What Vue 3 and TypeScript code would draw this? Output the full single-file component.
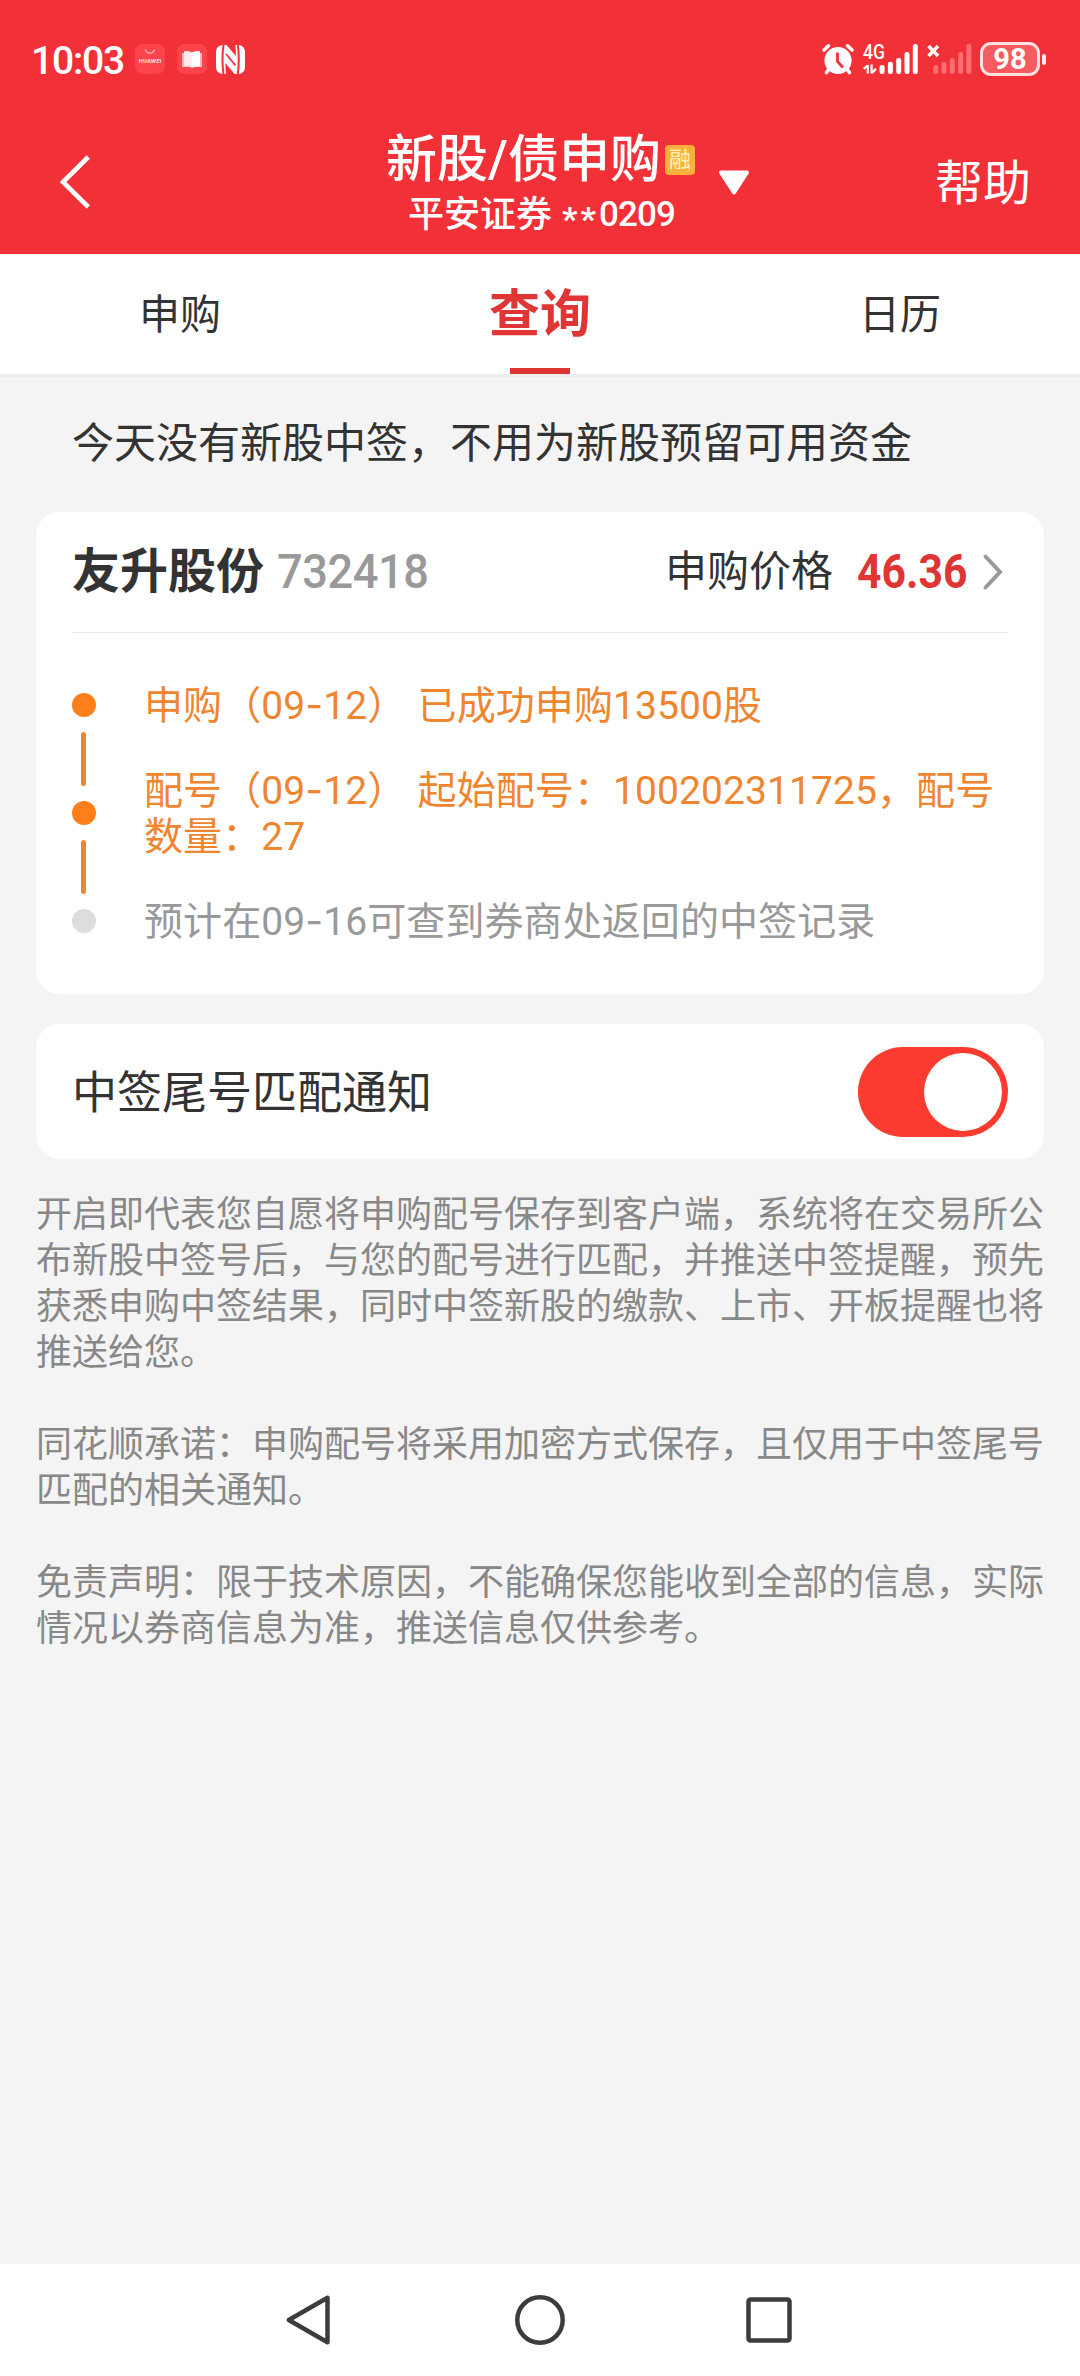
<script setup lang="ts">
import { ref } from 'vue'

interface Tab {
  key: string
  label: string
}

const tabs: Tab[] = [
  { key: 'apply', label: '申购' },
  { key: 'query', label: '查询' },
  { key: 'calendar', label: '日历' },
]
const activeTab = ref('query')
const notifyOn = ref(true)

const signalBars = [
  { x: 0, top: 21 },
  { x: 8.3, top: 17.7 },
  { x: 16.6, top: 14 },
  { x: 24.9, top: 8 },
  { x: 33.2, top: 0 },
]

const notes: string[] = [
  '开启即代表您自愿将申购配号保存到客户端，系统将在交易所公布新股中签号后，与您的配号进行匹配，并推送中签提醒，预先获悉申购中签结果，同时中签新股的缴款、上市、开板提醒也将推送给您。',
  '同花顺承诺：申购配号将采用加密方式保存，且仅用于中签尾号匹配的相关通知。',
  '免责声明：限于技术原因，不能确保您能收到全部的信息，实际情况以券商信息为准，推送信息仅供参考。',
]
</script>

<template>
  <div class="screen">
    <header class="top">
      <div class="status">
        <div class="status-left">
          <span class="time">10:03</span>
          <svg class="app-icon" width="30" height="30" viewBox="0 0 30 30">
            <rect width="30" height="30" rx="8" fill="#fd444c" />
            <path d="M10.5 5.5a4.6 4.6 0 0 0 9 0" fill="none" stroke="#ffd9db" stroke-width="1.2" />
            <text x="3.8" y="19" font-size="5.2" font-weight="700" textLength="22.5" fill="#ffe3e4">HUAWEI</text>
          </svg>
          <svg class="app-icon book" width="30" height="30" viewBox="0 0 30 30">
            <rect width="30" height="30" rx="8" fill="#fd444c" />
            <path d="M5 9h20v14H5z" fill="#ffb3b6" />
            <path d="M7 7.2q5-1 8 1.2v15.6q-3-2-8-1.2z" fill="#ffe9ea" />
            <path d="M23 7.2q-5-1-8 1.2v15.6q3-2 8-1.2z" fill="#fff" />
          </svg>
          <svg class="nfc" width="29" height="29" viewBox="0 0 29 29">
            <rect width="29" height="29" rx="6.5" fill="#fff" />
            <path d="M7.500 0Q5.500 14 7.500 29M21.800 0q2 14 0 29" fill="none" stroke="#f23037" stroke-width="2" />
            <path d="M10.500 0L19.800 11V5.500Q19.800 2.500 19.300 0z" fill="#f23037" />
            <path d="M9.500 18L18.500 29H9.800Q9.300 24 9.500 18z" fill="#f23037" />
            <path d="M10 9L19.500 20.500" stroke="#f23037" stroke-width="1.800" />
          </svg>
        </div>
        <div class="status-right">
          <svg class="alarm" width="32" height="31" viewBox="0 0 32 31">
            <circle cx="16" cy="16.500" r="13.600" fill="#fff" />
            <path d="M2 6L6.500 1.800M30 6L25.500 1.800" stroke="#fff" stroke-width="3.600" stroke-linecap="round" />
            <path d="M7 25L4.500 28.500M25 25l2.500 3.500" stroke="#fff" stroke-width="3.600" stroke-linecap="round" />
            <path d="M15.500 8.500v9l5.500 6" fill="none" stroke="#f23037" stroke-width="2.800" />
          </svg>
          <svg class="signal" width="56" height="31" viewBox="0 0 56 31">
            <text x="0" y="15.200" font-size="20" font-weight="500" textLength="22" lengthAdjust="spacingAndGlyphs" fill="#fff">4G</text>
            <path d="M4.800 29.500V21M4.500 21.500L0.800 25M8.600 20.500v9M9 29l4-4.200" stroke="#fff" stroke-width="2.200" fill="none" />
            <rect v-for="b in signalBars" :key="b.x" :x="16.600 + b.x" :y="b.top" width="5" :height="30 - b.top" rx="2.200" fill="#fff" />
          </svg>
          <svg class="signal-off" width="45" height="31" viewBox="0 0 45 31">
            <rect v-for="b in signalBars" :key="b.x" :x="6.200 + b.x" :y="b.top" width="5" :height="30 - b.top" rx="2.200" fill="#ff6d74" />
            <path d="M1.500 2L11 12M11 2L1.500 12" stroke="#fff" stroke-width="3.400" />
          </svg>
          <div class="battery"><span>98</span></div>
          <i class="nub"></i>
        </div>
      </div>

      <div class="bar">
        <svg class="back" width="32" height="56" viewBox="0 0 32 56">
          <path d="M28.300 3L3 28L28.300 53" fill="none" stroke="#fff" stroke-width="4.600" />
        </svg>
        <div class="title-area">
          <div class="titles">
            <h1>新股/债申购<span class="margin-tag">融</span></h1>
            <p class="account">平安证券<span class="stars">**</span><span class="acc-no">0209</span></p>
          </div>
          <svg class="caret" width="32" height="26" viewBox="0 0 32 26">
            <path d="M3 2.500h26L16 22.500z" fill="#fff" stroke="#fff" stroke-width="4" stroke-linejoin="round" />
          </svg>
        </div>
        <a class="help">帮助</a>
      </div>
    </header>

    <nav class="tabs">
      <button
        v-for="t in tabs"
        :key="t.key"
        :class="['tab', { active: t.key === activeTab }]"
        @click="activeTab = t.key"
      >
        {{ t.label }}
      </button>
    </nav>

    <main class="content">
      <p class="tip">今天没有新股中签，不用为新股预留可用资金</p>

      <section class="card stock">
        <div class="stock-head">
          <b class="name">友升股份</b>
          <span class="code">732418</span>
          <span class="label">申购价格</span>
          <span class="price">46.36</span>
          <svg class="arrow" width="20" height="36" viewBox="0 0 20 36">
            <path d="M2.500 2.500L17 18L2.500 33.500" fill="none" stroke="#999" stroke-width="4" stroke-linecap="round" />
          </svg>
        </div>
        <div class="timeline">
          <div class="track">
            <i class="dot"></i><i class="line"></i><i class="dot"></i><i class="line"></i><i class="dot idle"></i>
          </div>
          <div class="steps">
            <p>申购（09<span class="dash">-</span>12） 已成功申购13500股</p>
            <p>配号（09<span class="dash">-</span>12） 起始配号：100202311725，配号数量：27</p>
            <p class="idle">预计在09<span class="dash">-</span>16可查到券商处返回的中签记录</p>
          </div>
        </div>
      </section>

      <section class="card notify">
        <span class="notify-label">中签尾号匹配通知</span>
        <button :class="['switch', { on: notifyOn }]" @click="notifyOn = !notifyOn"><i></i></button>
      </section>

      <div class="notes">
        <p v-for="n in notes" :key="n">{{ n }}</p>
      </div>
    </main>

    <footer class="nav">
      <svg width="52" height="52" viewBox="0 0 52 52">
        <path d="M42.500 3.800V48.200L3.800 26z" />
      </svg>
      <svg width="52" height="52" viewBox="0 0 52 52">
        <circle cx="26" cy="26" r="22.700" />
      </svg>
      <svg width="52" height="52" viewBox="0 0 52 52">
        <rect x="5.500" y="5.500" width="41" height="41" rx="2" />
      </svg>
    </footer>
  </div>
</template>

<style>
body {
  margin: 0;
  background: #f4f4f4;
}
</style>

<style scoped>
.screen {
  display: flex;
  flex-direction: column;
  width: 1080px;
  height: 2376px;
  overflow: hidden;
  background: #f4f4f4;
  color: #333;
  font-family: Roboto, 'Noto Sans CJK SC', sans-serif;
  text-spacing-trim: space-all;
}
p,
h1 {
  margin: 0;
  font-weight: 400;
}
button {
  border: 0;
  padding: 0;
  background: none;
  font-family: inherit;
  color: inherit;
}
svg {
  display: block;
  flex: none;
  overflow: visible;
}

/* red header */
.top {
  height: 254px;
  background: #f23037;
  color: #fff;
}
.status {
  display: flex;
  justify-content: space-between;
  height: 118px;
  box-sizing: border-box;
  padding: 0 34px 0 31px;
}
.status-left,
.status-right {
  display: flex;
  align-items: center;
  height: 118px;
}
.time {
  width: 104px;
  font-family: Roboto, sans-serif;
  font-size: 39px;
  font-weight: 500;
  letter-spacing: -1.2px;
  line-height: 46px;
  padding-top: 3px;
}
.app-icon text {
  font-family: Inter, sans-serif;
}
.book {
  margin-left: 12px;
}
.nfc {
  margin-left: 9px;
}
.signal {
  margin-left: 9px;
}
.signal-off {
  margin-left: 8px;
}
.battery {
  box-sizing: border-box;
  width: 60px;
  height: 34px;
  margin-left: 8px;
  border: 3px solid #ffe1e2;
  border-radius: 11px;
  background: #f55b61;
  font-size: 29px;
  font-weight: 700;
  line-height: 29px;
  text-align: center;
}
.nub {
  width: 4px;
  height: 11px;
  margin-left: 2px;
  border-radius: 2px;
  background: #ffe9ea;
}
.bar {
  display: flex;
  align-items: center;
  height: 128px;
  padding: 0 49px 0 60px;
}
.title-area {
  display: flex;
  align-items: center;
  margin-left: 294px;
}
.titles {
  width: 332px;
}
h1 {
  display: flex;
  align-items: center;
  height: 66px;
  margin-top: 1px;
  font-size: 51px;
  font-weight: 500;
  line-height: 66px;
  white-space: nowrap;
}
.margin-tag {
  width: 30px;
  height: 30px;
  margin-left: 4px;
  border-radius: 4px;
  background: #fab03c;
  color: #fff0b8;
  font-size: 22px;
  font-weight: 400;
  line-height: 29px;
  text-align: center;
}
.account {
  display: flex;
  align-items: center;
  height: 46px;
  margin-top: -1px;
  margin-left: 22px;
  font-size: 36px;
  font-weight: 500;
  line-height: 46px;
}
.stars {
  margin: 7px 0 0 10px;
  font-size: 34px;
  font-weight: 700;
  letter-spacing: 3px;
}
.acc-no {
  font-size: 35px;
  letter-spacing: -0.9px;
}
.caret {
  margin-top: 2px;
}
.help {
  margin: -6px 0 0 auto;
  font-size: 48px;
}

/* tabs */
.tabs {
  display: flex;
  height: 120px;
  background: #fff;
  border-bottom: 3px solid #eee;
}
.tab {
  position: relative;
  flex: 1;
  padding-top: 2px;
  font-size: 41px;
  line-height: 118px;
}
.tab.active {
  color: #e03535;
  font-size: 51px;
  font-weight: 700;
}
.tab.active::after {
  content: '';
  position: absolute;
  left: 50%;
  bottom: 0;
  width: 60px;
  height: 6px;
  margin-left: -30px;
  background: #e03535;
}

/* content */
.content {
  flex: 1;
  padding: 0 36px;
}
.tip {
  height: 135px;
  padding-left: 36px;
  font-size: 42px;
  line-height: 133px;
}
.card {
  border-radius: 24px;
  background: #fff;
}
.stock {
  box-sizing: border-box;
  height: 482px;
  padding: 0 36px;
}
.stock-head {
  display: flex;
  align-items: center;
  height: 120px;
  border-bottom: 1px solid #ebebeb;
  line-height: 122px;
}
.name {
  font-size: 48px;
}
.code {
  width: 148px;
  margin-left: 13px;
  color: #999;
  font-size: 48px;
  font-weight: 500;
  letter-spacing: -0.4px;
  transform: scaleX(0.94);
  transform-origin: 0 50%;
}
.label {
  margin-left: auto;
  font-size: 42px;
}
.price {
  width: 110px;
  margin-left: 24px;
  color: #e03535;
  font-size: 48px;
  font-weight: 700;
  transform: scaleX(0.89);
  transform-origin: 0 50%;
}
.arrow {
  margin: 0 5px 0 16px;
}
.timeline {
  display: flex;
  gap: 48px;
  padding-top: 50px;
}
.track {
  display: flex;
  flex-direction: column;
  align-items: center;
  gap: 15px;
  width: 24px;
  padding-top: 10px;
}
.dot {
  width: 24px;
  height: 24px;
  border-radius: 50%;
  background: #ff801a;
}
.dot.idle {
  background: #ddd;
}
.line {
  width: 5px;
  height: 54px;
  margin-right: 1px;
  border-radius: 2.5px;
  background: #f08530;
}
.steps {
  display: flex;
  flex: 1;
  flex-direction: column;
  gap: 39px;
  color: #f08530;
  font-size: 39px;
  line-height: 46px;
  letter-spacing: 0.08px;
  word-spacing: 1.5px;
}
.steps .dash {
  font-family: Inter, sans-serif;
  line-height: 0;
}
.steps .idle {
  color: #999;
}
.notify {
  display: flex;
  align-items: center;
  justify-content: space-between;
  height: 135px;
  margin-top: 30px;
  padding: 0 36px;
  font-size: 45px;
}
.notify-label {
  margin-top: -4px;
}
.switch {
  display: flex;
  align-items: center;
  width: 150px;
  height: 90px;
  box-sizing: border-box;
  padding: 6px;
  border-radius: 45px;
  background: #ddd;
}
.switch.on {
  justify-content: flex-end;
  background: #fb3b30;
}
.switch i {
  width: 78px;
  height: 78px;
  border-radius: 50%;
  background: #fff;
}
.notes {
  display: flex;
  flex-direction: column;
  gap: 46px;
  padding-top: 33px;
  color: #888;
  font-size: 36px;
  line-height: 46px;
}

/* system navigation */
.nav {
  display: flex;
  align-items: center;
  justify-content: center;
  gap: 177px;
  height: 112px;
  background: #fff;
}
.nav path,
.nav circle,
.nav rect {
  fill: none;
  stroke: #3c3c3c;
  stroke-width: 4.5;
  stroke-linejoin: round;
}
</style>
